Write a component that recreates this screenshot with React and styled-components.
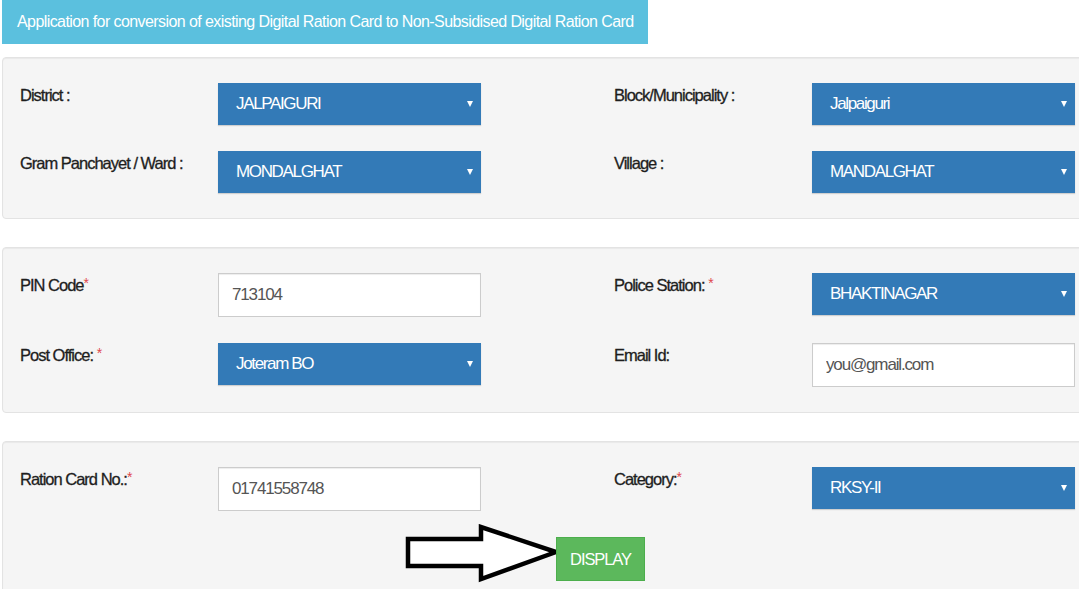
import React from "react"
import styled, { createGlobalStyle } from "styled-components"

const GlobalStyle = createGlobalStyle`
  html, body {
    margin: 0;
    padding: 0;
    background: #ffffff;
    overflow: hidden;
  }
  body {
    font-family: "Liberation Sans", Arial, sans-serif;
    color: #333;
  }
`

const blocks = [
  [
    [
      { label: "District :", type: "select", value: "JALPAIGURI" },
      { label: "Block/Municipality :", type: "select", value: "Jalpaiguri" },
    ],
    [
      { label: "Gram Panchayet / Ward :", type: "select", value: "MONDALGHAT" },
      { label: "Village :", type: "select", value: "MANDALGHAT" },
    ],
  ],
  [
    [
      { label: "PIN Code", req: "*", type: "input", value: "713104" },
      { label: "Police Station:", req: " *", type: "select", value: "BHAKTINAGAR" },
    ],
    [
      { label: "Post Office:", req: " *", type: "select", value: "Joteram BO" },
      { label: "Email Id:", type: "input", value: "you@gmail.com" },
    ],
  ],
]

const Field = ({ label, req, type, value }) => (
  <FieldCell>
    <Label>
      {label}
      {req && <Req>{req}</Req>}
    </Label>
    {type === "select" ? (
      <SelectBox>
        <span>{value}</span>
        <Caret />
      </SelectBox>
    ) : (
      <TextInput defaultValue={value} />
    )}
  </FieldCell>
)

const Arrow = () => (
  <ArrowSvg width="156" height="60" viewBox="0 0 156 60">
    <polygon
      points="3,15 76,15 76,3 151,28 76,55 76,42 3,42"
      fill="#ffffff"
      stroke="#000000"
      strokeWidth="4.5"
      strokeLinejoin="miter"
    />
  </ArrowSvg>
)

const App = () => (
  <Page>
    <GlobalStyle />
    <Heading>
      Application for conversion of existing Digital Ration Card to Non-Subsidised Digital Ration Card
    </Heading>

    {blocks.map((rows, i) => (
      <Well key={i}>
        {rows.map((row, j) => (
          <FormRow key={j}>
            {row.map((f) => (
              <Field key={f.label} {...f} />
            ))}
          </FormRow>
        ))}
      </Well>
    ))}

    <Well tall>
      <FormRow>
        <Field label="Ration Card No.:" req="*" type="input" value="01741558748" />
        <Field label="Category:" req="*" type="select" value="RKSY-II" />
      </FormRow>
      <ButtonRow>
        <ButtonWrap>
          <Arrow />
          <DisplayButton type="button">DISPLAY</DisplayButton>
        </ButtonWrap>
      </ButtonRow>
    </Well>
  </Page>
)

export default App

const Page = styled.div`
  width: 1100px;
  padding: 0 0 0 2px;
  display: flex;
  flex-direction: column;
  gap: 28px;
`

const Heading = styled.div`
  width: 631px;
  height: 44px;
  margin-bottom: -15px;
  padding-left: 15px;
  display: flex;
  align-items: center;
  background: #5bc0de;
  color: #ffffff;
  font-size: 16px;
  letter-spacing: -0.58px;
  white-space: nowrap;
`

const Well = styled.div`
  background: #f5f5f5;
  border: 1px solid #e3e3e3;
  border-radius: 4px;
  box-shadow: inset 0 1px 1px rgba(0, 0, 0, 0.05);
  padding: 25px 17px ${(props) => (props.tall ? "40px" : "25px")};
  display: flex;
  flex-direction: column;
  gap: 26px;
`

const FormRow = styled.div`
  display: grid;
  grid-template-columns: 461px 461px;
  column-gap: 133px;
  align-items: start;
`

const FieldCell = styled.div`
  display: grid;
  grid-template-columns: 198px 263px;
  align-items: start;
`

const Label = styled.label`
  font-size: 16.5px;
  line-height: 24px;
  letter-spacing: -1px;
  color: #1e1e1e;
  -webkit-text-stroke: 0.3px #1e1e1e;
  white-space: nowrap;
`

const Req = styled.span`
  color: #e0474c;
  font-size: 14px;
  vertical-align: top;
  line-height: 20px;
  letter-spacing: 0;
  -webkit-text-stroke: 0;
`

const SelectBox = styled.div`
  position: relative;
  height: 42px;
  box-sizing: border-box;
  padding: 0 24px 0 18px;
  display: flex;
  align-items: center;
  background: #337ab7;
  color: #ffffff;
  font-size: 17px;
  letter-spacing: -1.35px;
  box-shadow: 0 1px 1px rgba(0, 0, 0, 0.15);
`

const Caret = styled.span`
  position: absolute;
  right: 8px;
  top: 50%;
  margin-top: -3px;
  width: 0;
  height: 0;
  border-left: 3.5px solid transparent;
  border-right: 3.5px solid transparent;
  border-top: 6px solid #ffffff;
`

const TextInput = styled.input`
  height: 44px;
  box-sizing: border-box;
  width: 100%;
  padding: 0 13px;
  border: 1px solid #cccccc;
  border-radius: 0;
  background: #ffffff;
  color: #555555;
  font-family: "Liberation Sans", Arial, sans-serif;
  font-size: 17px;
  letter-spacing: -1.15px;
  box-shadow: inset 0 1px 1px rgba(0, 0, 0, 0.075);
  outline: none;
`

const ButtonRow = styled.div`
  display: flex;
  padding-left: 536px;
`

const ButtonWrap = styled.div`
  position: relative;
`

const ArrowSvg = styled.svg`
  position: absolute;
  right: calc(100% - 5px);
  top: -13px;
  display: block;
`

const DisplayButton = styled.button`
  position: relative;
  width: 89px;
  height: 44px;
  border: 1px solid #4cae4c;
  background: #5cb85c;
  color: #ffffff;
  font-family: "Liberation Sans", Arial, sans-serif;
  font-size: 16.5px;
  letter-spacing: -1.1px;
  padding: 0;
  cursor: pointer;
`
